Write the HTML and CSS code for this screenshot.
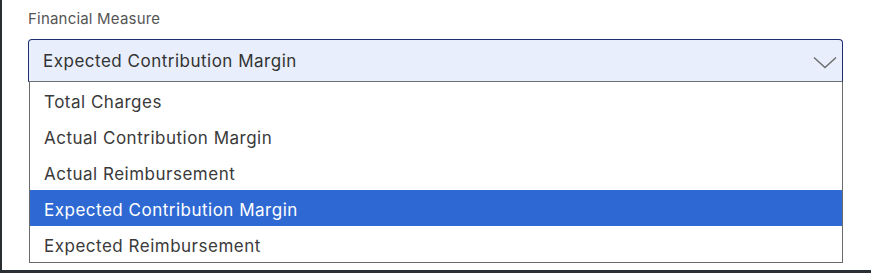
FILE: index.html
```html
<!DOCTYPE html>
<html>
<head>
<meta charset="utf-8">
<link rel="stylesheet" href="styles.css">
</head>
<body>
<div class="frame">
  <div class="field">
    <div class="label">Financial Measure</div>
    <div class="select">
      <span class="value">Expected Contribution Margin</span>
      <svg class="chev" width="24" height="13" viewBox="0 0 24 13"><path d="M1 1.5 L12 11.5 L23 1.5" fill="none" stroke="#6b6b6b" stroke-width="1.4"/></svg>
    </div>
    <div class="list">
      <div class="opt">Total Charges</div>
      <div class="opt">Actual Contribution Margin</div>
      <div class="opt">Actual Reimbursement</div>
      <div class="opt sel">Expected Contribution Margin</div>
      <div class="opt">Expected Reimbursement</div>
    </div>
  </div>
</div>
</body>
</html>
```
FILE: styles.css
```css
html, body { margin: 0; padding: 0; background: #fff; }
body { width: 871px; height: 273px; overflow: hidden; font-family: Inter, "Noto Sans", sans-serif; }
.frame {
  box-sizing: border-box;
  height: 273px;
  border-left: 2px solid #2a2d30;
  border-bottom: 3px solid #2b2f33;
  padding: 9px 28px 0 26px;
}
.field { display: flex; flex-direction: column; }
.label { font-size: 15px; line-height: 20px; color: #555; height: 30px; letter-spacing: 0.2px; }
.select {
  box-sizing: border-box;
  height: 43px;
  border: 1px solid #1f2e6e;
  border-bottom-color: #707070;
  border-radius: 4px 4px 0 0;
  background: #e8eefc;
  display: flex;
  align-items: center;
  justify-content: space-between;
  padding: 1px 5px 0 14px;
}
.value { font-size: 17px; color: #333; letter-spacing: 0.5px; }
.chev { display: block; margin-top: 3px; }
.list {
  box-sizing: border-box;
  margin-left: 1px;
  border: 1.5px solid #6a6a6a;
  border-top: none;
  background: #fff;
}
.opt {
  box-sizing: border-box;
  height: 36px;
  display: flex;
  align-items: center;
  padding: 3px 0 0 14px;
  font-size: 17px;
  letter-spacing: 0.5px;
  color: #3a3a3a;
}
.opt.sel { background: #2e69d3; color: #fff; }
```
